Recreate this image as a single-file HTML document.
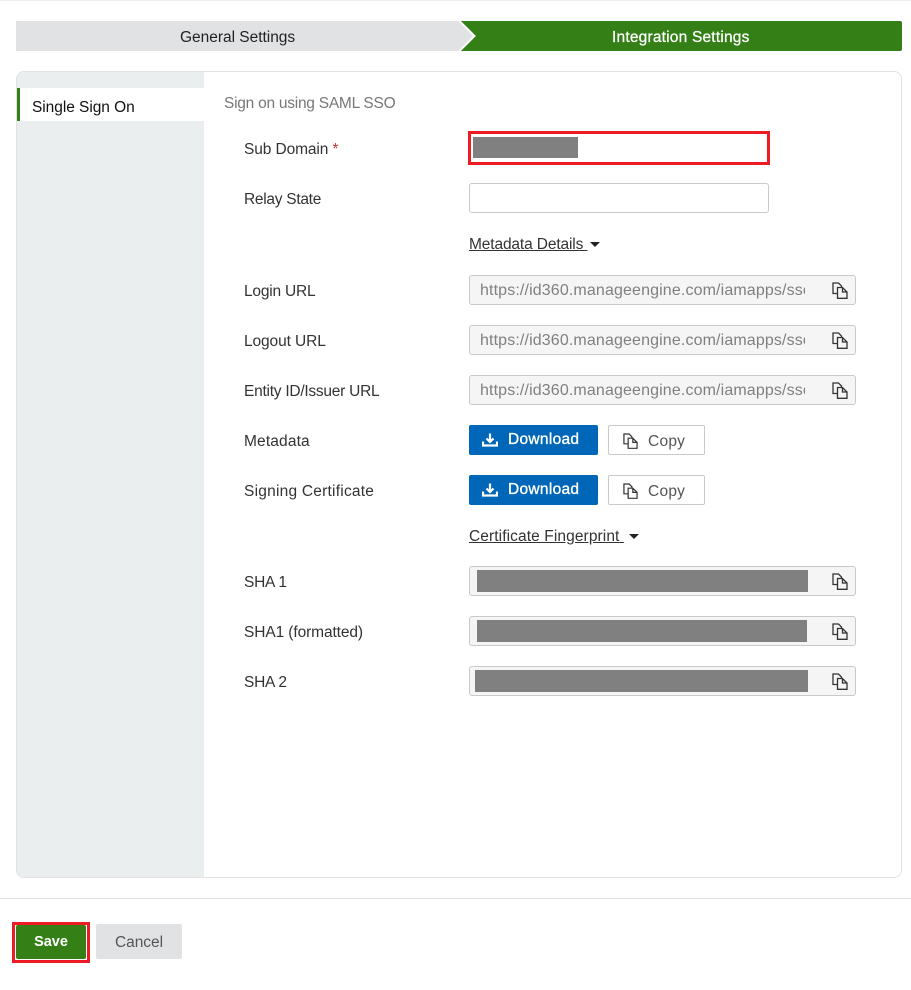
<!DOCTYPE html>
<html><head><meta charset="utf-8"><style>
html,body{margin:0;padding:0;background:#fff}
body{width:911px;height:990px;position:relative;overflow:hidden;font-family:"Liberation Sans",sans-serif;font-size:15.5px;color:#333}
div,span,svg{position:absolute;box-sizing:border-box;white-space:nowrap}
.l{left:244px;line-height:20px;height:20px;letter-spacing:-.1px;color:#333;margin-top:1px}
.inp{left:469px;width:387px;height:30px;background:#f5f5f5;border:1px solid #c9c9c9;border-radius:3px}
.url{left:10px;top:4px;width:325px;overflow:hidden;line-height:21px;color:#808080;letter-spacing:.13px;font-size:16px}
.mask{background:#808080;height:22px}
.ic{left:832px;width:16px;height:17px}
.dl{left:469px;width:129px;height:30px;background:#0067b8;border-radius:2px;color:#fff;line-height:28px}
.dl span{left:39px;top:1px;letter-spacing:.3px;-webkit-text-stroke:.35px #fff}
.cp{left:608px;width:97px;height:30px;border:1px solid #c9c9c9;border-radius:2px;background:#fff;color:#555;line-height:28px}
.cp span{left:39px;top:2px;letter-spacing:.25px}
.a{left:469px;line-height:20px;color:#333;text-decoration:underline;margin-top:1px}
.tri{width:0;height:0;border-left:5px solid transparent;border-right:5px solid transparent;border-top:5px solid #222}
</style></head><body>
<svg width="0" height="0" style="left:0;top:0"><defs>
<symbol id="c" viewBox="0 0 16 17"><path d="M5.500 11.500H1V1H6.500L9.500 4V5.500M5.500 5.500H10.500L15 10V16.300H5.500ZM10.500 5.500V10H15" fill="none" stroke="#333" stroke-width="1.300"/></symbol>
<symbol id="d" viewBox="0 0 16 14"><path d="M8 .5V8.500M4.500 5.500L8 9 11.500 5.500M1 8.500V12.500H15V8.500" fill="none" stroke="#fff" stroke-width="2.200"/></symbol>
</defs></svg>

<div style="left:0;top:0;width:911px;height:1px;background:#eee"></div>
<svg style="left:16px;top:21px" width="886" height="30"><path d="M2 0H884a2 2 0 0 1 2 2V28a2 2 0 0 1-2 2H2a2 2 0 0 1-2-2V2a2 2 0 0 1 2-2Z" fill="#348017"/><path d="M2 0H443.500L458.500 15 443.500 30H2a2 2 0 0 1-2-2V2a2 2 0 0 1 2-2Z" fill="#e0e2e4"/><path d="M443.500 0L458.500 15 443.500 30" fill="none" stroke="#fff" stroke-width="2"/></svg>
<span style="left:180px;top:28px;line-height:20px;color:#222;letter-spacing:-.02px">General Settings</span>
<span style="left:612px;top:28px;line-height:20px;color:#fff;letter-spacing:.2px;-webkit-text-stroke:.25px #fff">Integration Settings</span>

<div style="left:16px;top:71px;width:886px;height:807px;border:1px solid #e2e2e2;border-radius:8px;overflow:hidden;background:#fff">
<div style="left:0;top:0;width:187px;height:805px;background:#eaeeef"></div>
<div style="left:0;top:16px;width:187px;height:33px;background:#fff;border-left:3px solid #348017"></div>
</div>
<span style="left:32px;top:98px;line-height:20px;color:#111;letter-spacing:-.05px">Single Sign On</span>
<span style="left:224px;top:94px;line-height:20px;color:#777;letter-spacing:-.25px">Sign on using SAML SSO</span>

<span class="l" style="top:139px">Sub Domain <b style="color:#c33;font-weight:400;position:static">*</b></span>
<div style="left:468px;top:131px;width:302px;height:34px;border:3px solid #ed1c24;background:#fff"></div>
<div class="mask" style="left:473px;top:137px;width:105px;height:21px"></div>

<span class="l" style="top:189px;letter-spacing:-.28px">Relay State</span>
<div style="left:469px;top:183px;width:300px;height:30px;border:1px solid #c9c9c9;border-radius:3px;background:#fff"></div>

<span class="a" style="top:234px;letter-spacing:-.13px">Metadata Details&nbsp;</span><div class="tri" style="left:590px;top:242px"></div>

<span class="l" style="top:281px;letter-spacing:-.2px">Login URL</span>
<div class="inp" style="top:275px"><div class="url">https://id360.manageengine.com/iamapps/sso</div></div>
<svg class="ic" style="top:282px"><use href="#c"/></svg>

<span class="l" style="top:331px">Logout URL</span>
<div class="inp" style="top:325px"><div class="url">https://id360.manageengine.com/iamapps/sso</div></div>
<svg class="ic" style="top:332px"><use href="#c"/></svg>

<span class="l" style="top:381px;letter-spacing:-.25px">Entity ID/Issuer URL</span>
<div class="inp" style="top:375px"><div class="url">https://id360.manageengine.com/iamapps/sso</div></div>
<svg class="ic" style="top:382px"><use href="#c"/></svg>

<span class="l" style="top:431px;letter-spacing:.15px">Metadata</span>
<div class="dl" style="top:425px"><svg style="left:13px;top:8px" width="16" height="14"><use href="#d"/></svg><span>Download</span></div>
<div class="cp" style="top:425px"><svg style="left:14px;top:7px" width="15" height="16"><use href="#c"/></svg><span>Copy</span></div>

<span class="l" style="top:481px;letter-spacing:.23px">Signing Certificate</span>
<div class="dl" style="top:475px"><svg style="left:13px;top:8px" width="16" height="14"><use href="#d"/></svg><span>Download</span></div>
<div class="cp" style="top:475px"><svg style="left:14px;top:7px" width="15" height="16"><use href="#c"/></svg><span>Copy</span></div>

<span class="a" style="top:526px;letter-spacing:.1px">Certificate Fingerprint&nbsp;</span><div class="tri" style="left:629px;top:534px"></div>

<span class="l" style="top:572px;letter-spacing:-.25px">SHA 1</span>
<div class="inp" style="top:566px"></div><div class="mask" style="left:477px;top:570px;width:331px"></div>
<svg class="ic" style="top:573px"><use href="#c"/></svg>

<span class="l" style="top:622px">SHA1 (formatted)</span>
<div class="inp" style="top:616px"></div><div class="mask" style="left:477px;top:620px;width:330px"></div>
<svg class="ic" style="top:623px"><use href="#c"/></svg>

<span class="l" style="top:672px;letter-spacing:-.25px">SHA 2</span>
<div class="inp" style="top:666px"></div><div class="mask" style="left:475px;top:670px;width:333px"></div>
<svg class="ic" style="top:673px"><use href="#c"/></svg>

<div style="left:0;top:898px;width:911px;height:1px;background:#e2e2e2"></div>
<div style="left:12px;top:922px;width:78px;height:41px;border:3px solid #ed1c24;background:#fff"></div>
<div style="left:16px;top:925px;width:70px;height:34px;background:#348017;border-radius:2px;color:#fff;text-align:center;line-height:35px;font-weight:700;font-size:14.5px">Save</div>
<div style="left:96px;top:924px;width:86px;height:35px;background:#e0e2e4;border-radius:2px;color:#555;text-align:center;line-height:37px;letter-spacing:-.05px">Cancel</div>
</body></html>
